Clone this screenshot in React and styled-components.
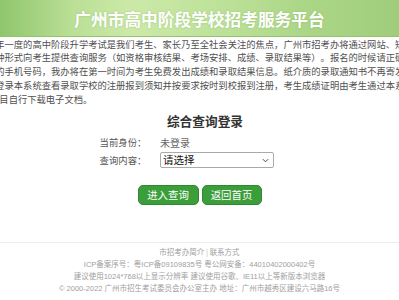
import React from 'react'
import styled, { createGlobalStyle } from 'styled-components'

const GlobalStyle = createGlobalStyle`
  html, body {
    margin: 0;
    padding: 0;
    background: #fff;
    overflow: hidden;
  }
`

const introLines = [
  '每年一度的高中阶段升学考试是我们考生、家长乃至全社会关注的焦点，广州市招考办将通过网站、短信',
  '多种形式向考生提供查询服务（如资格审核结果、考场安排、成绩、录取结果等）。报名的时候请正确填写',
  '己的手机号码，我办将在第一时间为考生免费发出成绩和录取结果信息。纸介质的录取通知书不再寄发，请考',
  '生登录本系统查看录取学校的注册报到须知并按要求按时到校报到注册，考生成绩证明由考生通过本系统的',
  '”栏目自行下载电子文档。',
]

const footerLines = [
  'ICP备案序号：粤ICP备09109835号 粤公网安备：44010402000402号',
  '建议使用1024*768以上显示分辨率 建议使用谷歌、IE11以上等新版本浏览器',
  '© 2000-2022 广州市招生考试委员会办公室主办 地址：广州市越秀区建设六马路16号',
]

function App() {
  return (
    <Page>
      <GlobalStyle />
      <Header>
        <HeaderTitle>广州市高中阶段学校招考服务平台</HeaderTitle>
      </Header>

      <Intro>
        {introLines.map((line, i) => (
          <IntroLine key={i}>{line}</IntroLine>
        ))}
      </Intro>

      <LoginBox>
        <LoginTitle>综合查询登录</LoginTitle>
        <FormRow>
          <Label>当前身份：</Label>
          <Value>未登录</Value>
        </FormRow>
        <FormRow>
          <Label>查询内容：</Label>
          <SelectWrap>
            <Select defaultValue="">
              <option value="">请选择</option>
            </Select>
            <Arrow viewBox="0 0 8 5" width="7" height="5">
              <path d="M1 1l3 3 3-3" fill="none" stroke="#444" strokeWidth="1.1" />
            </Arrow>
          </SelectWrap>
        </FormRow>
      </LoginBox>

      <ButtonRow>
        <GreenButton $width={61}>进入查询</GreenButton>
        <GreenButton $width={60}>返回首页</GreenButton>
      </ButtonRow>

      <Footer>
        <FooterLinks>
          <FooterLink>市招考办简介</FooterLink> | <FooterLink>联系方式</FooterLink>
        </FooterLinks>
        {footerLines.map((line, i) => (
          <FooterLine key={i}>{line}</FooterLine>
        ))}
      </Footer>
    </Page>
  )
}

const Page = styled.div`
  width: 100vw;
  height: 300px;
  overflow: hidden;
  display: flex;
  flex-direction: column;
  align-items: center;
`

const Header = styled.div`
  align-self: stretch;
  height: 36px;
  border-bottom: 1px solid #94c36f;
  background: linear-gradient(90deg, #8fc66c 0%, #badf95 18%, #cce9a8 33%, #c0e39c 52%, #add788 75%, #9fcd7b 100%);
  display: flex;
  align-items: center;
  justify-content: center;
`

const HeaderTitle = styled.h1`
  margin: 0;
  color: #fff;
  font-family: "Noto Sans CJK SC", sans-serif;
  font-size: 16.7px;
  font-weight: bold;
  line-height: 20px;
  padding-top: 2px;
  text-shadow: 0 0 2px rgba(90, 140, 60, 0.35);
`

const Intro = styled.div`
  flex: none;
  width: 427.2px;
  margin-top: 1.5px;
  color: #505050;
  font-family: "Liberation Serif", "Noto Sans CJK SC", serif;
  font-size: 9.3px;
  line-height: 13.9px;
  text-spacing-trim: space-all;
`

const IntroLine = styled.div`
  white-space: nowrap;
`

const LoginBox = styled.div`
  width: 200px;
  margin-top: 6px;
  font-family: "Liberation Serif", "Noto Sans CJK SC", serif;
`

const LoginTitle = styled.div`
  padding-left: 11px;
  text-align: center;
  color: #333;
  font-size: 12.7px;
  font-weight: bold;
  line-height: 16px;
  margin-bottom: 3.5px;
`

const FormRow = styled.div`
  display: grid;
  grid-template-columns: 60.5px auto;
  align-items: center;
  height: 17.5px;
`

const Label = styled.span`
  color: #555;
  font-size: 9.4px;
`

const Value = styled.span`
  color: #666;
  font-size: 10px;
`

const SelectWrap = styled.div`
  position: relative;
  width: 114px;
  height: 16px;
`

const Select = styled.select`
  appearance: none;
  -webkit-appearance: none;
  display: block;
  width: 114px;
  height: 16px;
  padding: 0 12px 0 2px;
  border: 1px solid #aaa;
  border-radius: 2px;
  background: #fff;
  color: #111;
  font-family: "Noto Sans CJK SC", sans-serif;
  font-size: 10.5px;
  line-height: 14px;
  outline: none;
`

const Arrow = styled.svg`
  position: absolute;
  right: 5px;
  top: 6px;
  pointer-events: none;
`

const ButtonRow = styled.div`
  display: flex;
  gap: 3px;
  margin-top: 16.5px;
`

const GreenButton = styled.button`
  width: ${p => p.$width}px;
  height: 20px;
  padding: 0;
  border: 1px solid #2f8a2f;
  border-radius: 5px;
  background: #3b9e3b;
  color: #fff;
  font-family: "Noto Sans CJK SC", sans-serif;
  font-size: 10.4px;
  line-height: 18px;
  cursor: pointer;
`

const Footer = styled.div`
  align-self: stretch;
  margin-top: 37px;
  padding-top: 3.7px;
  border-top: 1px solid #ececec;
  color: #a0a0a0;
  font-family: "Liberation Sans", "Noto Sans CJK SC", sans-serif;
  font-size: 7.5px;
  line-height: 12.1px;
  text-align: center;
`

const FooterLinks = styled.div`
  font-family: "Liberation Serif", "Noto Sans CJK SC", serif;
`

const FooterLink = styled.span`
  color: #a0a0a0;
  cursor: pointer;
`

const FooterLine = styled.div`
  white-space: nowrap;
`

export default App
